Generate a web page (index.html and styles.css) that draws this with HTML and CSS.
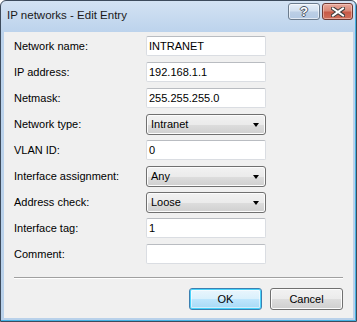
FILE: index.html
```html
<!DOCTYPE html>
<html lang="en">

<head>
    <meta charset="UTF-8">
    <title>IP networks - Edit Entry</title>
    <link rel="stylesheet" href="styles.css">
</head>

<body>
    <div class="window">
        <div class="titlebar">
            <span class="title">IP networks - Edit Entry</span>
            <div class="caption-buttons">
                <span class="cap-btn help">?</span>
                <span class="cap-btn close">
                    <svg width="14" height="10" viewBox="0 0 14 10">
                        <path d="M2 1.5 L12 8.5 M12 1.5 L2 8.5" stroke="#3b3b3b" stroke-width="4" stroke-linecap="square" />
                        <path d="M2 1.5 L12 8.5 M12 1.5 L2 8.5" stroke="#ffffff" stroke-width="2" stroke-linecap="square" />
                    </svg>
                </span>
            </div>
        </div>

        <div class="client">
            <div class="fields">
                <span class="label">Network name:</span>
                <div class="textbox">INTRANET</div>

                <span class="label">IP address:</span>
                <div class="textbox">192.168.1.1</div>

                <span class="label">Netmask:</span>
                <div class="textbox">255.255.255.0</div>

                <span class="label">Network type:</span>
                <div class="combo">Intranet</div>

                <span class="label">VLAN ID:</span>
                <div class="textbox">0</div>

                <span class="label">Interface assignment:</span>
                <div class="combo">Any</div>

                <span class="label">Address check:</span>
                <div class="combo">Loose</div>

                <span class="label">Interface tag:</span>
                <div class="textbox">1</div>

                <span class="label">Comment:</span>
                <div class="textbox"></div>
            </div>

            <div class="separator"></div>

            <div class="actions">
                <button class="btn default">OK</button>
                <button class="btn">Cancel</button>
            </div>
        </div>
    </div>
</body>

</html>
```

FILE: styles.css
```css
html,
body {
    margin: 0;
    padding: 0;
}

body {
    font-family: 'Liberation Sans', Arial, sans-serif;
    font-size: 11px;
    color: #000;
    background: #ffffff;
}

.window {
    box-sizing: border-box;
    width: 357px;
    height: 322px;
    display: flex;
    flex-direction: column;
    border: 1px solid #3d4b5c;
    border-radius: 6px 6px 0 0;
    background: linear-gradient(#d3e2f3 0px, #bcd3ec 31px, #b9d1ea 100%);
    box-shadow: inset -1px -1px 0 #45b2e4;
}

.titlebar {
    height: 31px;
    display: flex;
    justify-content: space-between;
    align-items: flex-start;
    flex-shrink: 0;
}

.title {
    margin: 7px 0 0 6px;
    line-height: 14px;
    font-size: 11.5px;
    color: #1a1a1a;
}

.caption-buttons {
    display: flex;
    gap: 2px;
    margin: 2px 3px 0 0;
}

.cap-btn {
    box-sizing: border-box;
    height: 17px;
    display: flex;
    align-items: center;
    justify-content: center;
    border: 1px solid #6c7c8e;
    border-radius: 3px;
}

.help {
    width: 32px;
    background: linear-gradient(#e6eef8 0%, #d2e0f0 48%, #bccfe6 52%, #b3c9e3 100%);
    box-shadow: inset 0 0 0 1px rgba(255, 255, 255, 0.6);
    color: #ffffff;
    font-weight: bold;
    font-size: 13px;
    text-shadow: 1px 0 0 #4a5464, -1px 0 0 #4a5464, 0 1px 0 #4a5464, 0 -1px 0 #4a5464;
}

.close {
    width: 31px;
    border-color: #6d3a35;
    background: linear-gradient(#e8a99c 0%, #d98877 45%, #c75a48 55%, #d0705c 100%);
    box-shadow: inset 0 0 0 1px rgba(255, 220, 210, 0.5);
}

.client {
    flex: 1;
    margin: 0 3px 3px 3px;
    padding: 4px 10px 0 10px;
    background: #f0f0f0;
}

.fields {
    display: grid;
    grid-template-columns: 132px 120px;
    grid-auto-rows: 21px;
    row-gap: 5px;
    align-items: start;
}

.label {
    line-height: 20px;
}

.textbox {
    box-sizing: border-box;
    height: 20px;
    padding-left: 2px;
    line-height: 18px;
    background: #ffffff;
    border: 1px solid #dadde2;
    border-top-color: #b9bcc1;
    border-radius: 2px;
}

.combo {
    position: relative;
    box-sizing: border-box;
    height: 21px;
    padding-left: 4px;
    line-height: 19px;
    border: 1px solid #707070;
    border-radius: 3px;
    background: linear-gradient(#f2f2f2 0%, #ebebeb 50%, #dddddd 51%, #cfcfcf 100%);
    box-shadow: inset 0 0 0 1px #fcfcfc;
}

/* dropdown arrow */
.combo::after {
    content: "";
    position: absolute;
    right: 6px;
    top: 8px;
    border-left: 3.5px solid transparent;
    border-right: 3.5px solid transparent;
    border-top: 4px solid #000;
}

.separator {
    margin-top: 12px;
    height: 1px;
    background: #a0a0a0;
    border-bottom: 1px solid #ffffff;
}

.actions {
    display: flex;
    justify-content: flex-end;
    gap: 8px;
    margin-top: 9px;
}

.btn {
    box-sizing: border-box;
    width: 73px;
    height: 22px;
    padding: 0;
    font-family: 'Liberation Sans', Arial, sans-serif;
    font-size: 11px;
    color: #000;
    border: 1px solid #707070;
    border-radius: 3px;
    background: linear-gradient(#f2f2f2 0%, #ebebeb 50%, #dddddd 51%, #cfcfcf 100%);
    box-shadow: inset 0 0 0 1px #fcfcfc;
}

.btn.default {
    border-color: #3c7fb1;
    background: linear-gradient(#eaf6fd 0%, #d9f0fc 50%, #bee6fd 51%, #a7d9f5 100%);
    box-shadow: inset 0 0 0 1px #48d3fb, inset 0 0 0 2px rgba(255, 255, 255, 0.5);
}
```
